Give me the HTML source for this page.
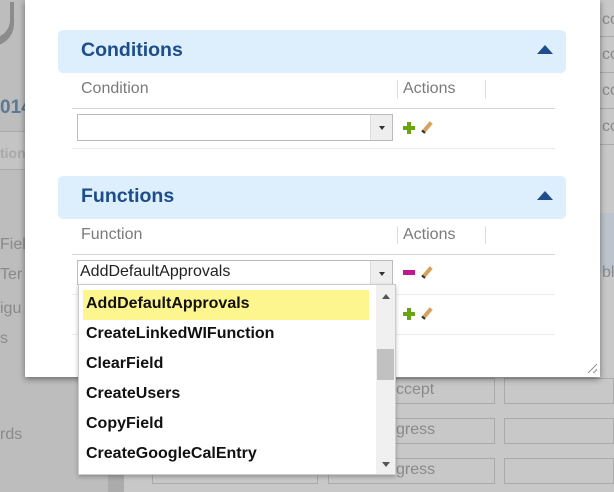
<!DOCTYPE html>
<html><head><meta charset="utf-8"><style>
*{margin:0;padding:0;box-sizing:border-box}
body{width:614px;height:492px;overflow:hidden;position:relative;background:#bdbdbd;font-family:"Liberation Sans",Arial,sans-serif}
.a{position:absolute}
.bgt{color:#8a8a8a;font-size:16px}
.hdr{position:absolute;left:58px;width:508px;height:43px;background:#ddeefc;border-radius:5px}
.hdr b{position:absolute;left:23px;top:9px;font-size:19.5px;color:#1d4d8a}
.hdr i{position:absolute;left:479px;top:15px;width:0;height:0;border-left:8px solid transparent;border-right:8px solid transparent;border-bottom:9px solid #1d4d8a}
.col{position:absolute;font-size:16px;color:#7a7a7a}
.vd{position:absolute;width:1px;height:18px;background:#ddd}
.hl{position:absolute;left:72px;width:483px;height:1px;background:#d6d6d6}
.hl2{position:absolute;left:72px;width:483px;height:1px;background:#ececec}
.sel{position:absolute;left:77px;width:316px;height:27px;border:1px solid #bbb;background:#fff;font-size:16px;color:#222;padding:2px 0 0 2px}
.sel .btn{position:absolute;right:0;top:0;width:22px;height:25px;background:#eee;border-left:1px solid #ddd}
.sel .btn:after{content:"";position:absolute;left:8px;top:11px;border-left:3px solid transparent;border-right:3px solid transparent;border-top:4px solid #333}
.plus{position:absolute;width:12px;height:12px}
.plus:before{content:"";position:absolute;left:4px;top:0;width:4px;height:12px;background:#6aa315}
.plus:after{content:"";position:absolute;left:0;top:4px;width:12px;height:4px;background:#6aa315}
.pen{position:absolute;width:4px;height:13px;background:#d9a05a;transform:rotate(40deg);border-bottom:2px solid #333}
.it{position:absolute;left:86px;font-size:16px;font-weight:bold;color:#111}
</style></head><body>
<div class="a" style="left:110px;top:376px;width:504px;height:116px;background:#c8c8c8"></div>
<div class="a" style="left:108px;top:376px;width:16px;height:116px;background:#ababab"></div>
<div class="a" style="left:600px;top:0;width:14px;height:376px;background:#c8c8c8"></div>
<div class="a" style="left:-14px;top:2px;width:28px;height:44px;border-radius:0 0 22px 0;background:#8c8c8c"></div>
<div class="a" style="left:-14px;top:2px;width:24px;height:36px;border-radius:0 0 18px 0;background:#bdbdbd"></div>
<div class="a" style="left:0;top:97px;font-size:19px;font-weight:bold;color:#5b7895">014</div>
<div class="a" style="left:0;top:131px;width:25px;height:39px;background:#c4c4c4;border-top:1px solid #aaa;border-bottom:1px solid #aaa"></div>
<div class="a" style="left:0;top:145px;font-size:14px;color:#a9a9a9;font-weight:bold">tion</div>
<div class="a bgt" style="left:0;top:236px">Fiel</div>
<div class="a bgt" style="left:0;top:266px">Ter</div>
<div class="a bgt" style="left:0;top:300px">igu</div>
<div class="a bgt" style="left:0;top:330px">s</div>
<div class="a bgt" style="left:0;top:426px">rds</div>
<div class="a bgt" style="left:602px;top:11px">co</div>
<div class="a bgt" style="left:602px;top:46px">co</div>
<div class="a bgt" style="left:602px;top:82px">co</div>
<div class="a bgt" style="left:602px;top:118px">co</div>
<div class="a" style="left:600px;top:36px;width:14px;height:1px;background:#aaa"></div>
<div class="a" style="left:600px;top:72px;width:14px;height:1px;background:#aaa"></div>
<div class="a" style="left:600px;top:108px;width:14px;height:1px;background:#aaa"></div>
<div class="a" style="left:600px;top:144px;width:14px;height:1px;background:#aaa"></div>
<div class="a" style="left:600px;top:213px;width:14px;height:60px;background:#bcc3cc"></div>
<div class="a bgt" style="left:602px;top:264px">ble</div>
<div class="a" style="left:152px;top:378px;width:166px;height:26px;border:1px solid #aaa"></div>
<div class="a" style="left:328px;top:378px;width:167px;height:26px;border:1px solid #aaa"></div>
<div class="a" style="left:504px;top:378px;width:110px;height:26px;border:1px solid #aaa"></div>
<div class="a" style="left:152px;top:418px;width:166px;height:26px;border:1px solid #aaa"></div>
<div class="a" style="left:328px;top:418px;width:167px;height:26px;border:1px solid #aaa"></div>
<div class="a" style="left:504px;top:418px;width:110px;height:26px;border:1px solid #aaa"></div>
<div class="a" style="left:152px;top:458px;width:166px;height:26px;border:1px solid #aaa"></div>
<div class="a" style="left:328px;top:458px;width:167px;height:26px;border:1px solid #aaa"></div>
<div class="a" style="left:504px;top:458px;width:110px;height:26px;border:1px solid #aaa"></div>
<div class="a bgt" style="left:396px;top:381px">ccept</div>
<div class="a bgt" style="left:396px;top:421px">gress</div>
<div class="a bgt" style="left:396px;top:461px">gress</div>
<div class="a" style="left:25px;top:0;width:575px;height:377px;background:#fff;box-shadow:0 2px 6px rgba(0,0,0,.45)"></div>
<div class="a" style="left:588px;top:364px;width:9px;height:9px;background:linear-gradient(135deg,transparent 45%,#999 45%,#999 55%,transparent 55%,transparent 75%,#999 75%,#999 85%,transparent 85%)"></div>
<div class="hdr" style="top:30px"><b>Conditions</b><i></i></div>
<div class="col" style="left:81px;top:80px">Condition</div>
<div class="vd" style="left:397px;top:80px"></div>
<div class="col" style="left:403px;top:80px">Actions</div>
<div class="vd" style="left:485px;top:80px"></div>
<div class="hl" style="top:108px"></div>
<div class="sel" style="top:114px"><span class="btn"></span></div>
<div class="plus" style="left:403px;top:122px"></div>
<div class="pen" style="left:425px;top:121px"></div>
<div class="hl2" style="top:148px"></div>
<div class="hdr" style="top:176px"><b>Functions</b><i></i></div>
<div class="col" style="left:81px;top:226px">Function</div>
<div class="vd" style="left:397px;top:226px"></div>
<div class="col" style="left:403px;top:226px">Actions</div>
<div class="vd" style="left:485px;top:226px"></div>
<div class="hl" style="top:254px"></div>
<div class="sel" style="top:260px;height:25px">AddDefaultApprovals<span class="btn" style="height:23px"></span></div>
<div class="a" style="left:403px;top:270px;width:12px;height:5px;background:#c0188f"></div>
<div class="pen" style="left:425px;top:266px"></div>
<div class="hl2" style="top:294px"></div>
<div class="plus" style="left:403px;top:308px"></div>
<div class="pen" style="left:425px;top:307px"></div>
<div class="hl2" style="top:334px"></div>
<div class="a" style="left:78px;top:284px;width:318px;height:191px;background:#fff;border:1px solid #ccc;box-shadow:0 2px 4px rgba(0,0,0,.25)"></div>
<div class="a" style="left:83px;top:290px;width:286px;height:30px;background:#fdf58d"></div>
<div class="it" style="top:295px">AddDefaultApprovals</div>
<div class="it" style="top:325px">CreateLinkedWIFunction</div>
<div class="it" style="top:355px">ClearField</div>
<div class="it" style="top:385px">CreateUsers</div>
<div class="it" style="top:415px">CopyField</div>
<div class="it" style="top:445px">CreateGoogleCalEntry</div>
<div class="a" style="left:376px;top:285px;width:19px;height:189px;background:#f0f0f0"></div>
<div class="a" style="left:377px;top:349px;width:17px;height:31px;background:#c1c1c1"></div>
<div class="a" style="left:382px;top:294px;border-left:4px solid transparent;border-right:4px solid transparent;border-bottom:5px solid #555"></div>
<div class="a" style="left:382px;top:462px;border-left:4px solid transparent;border-right:4px solid transparent;border-top:5px solid #555"></div>
</body></html>
